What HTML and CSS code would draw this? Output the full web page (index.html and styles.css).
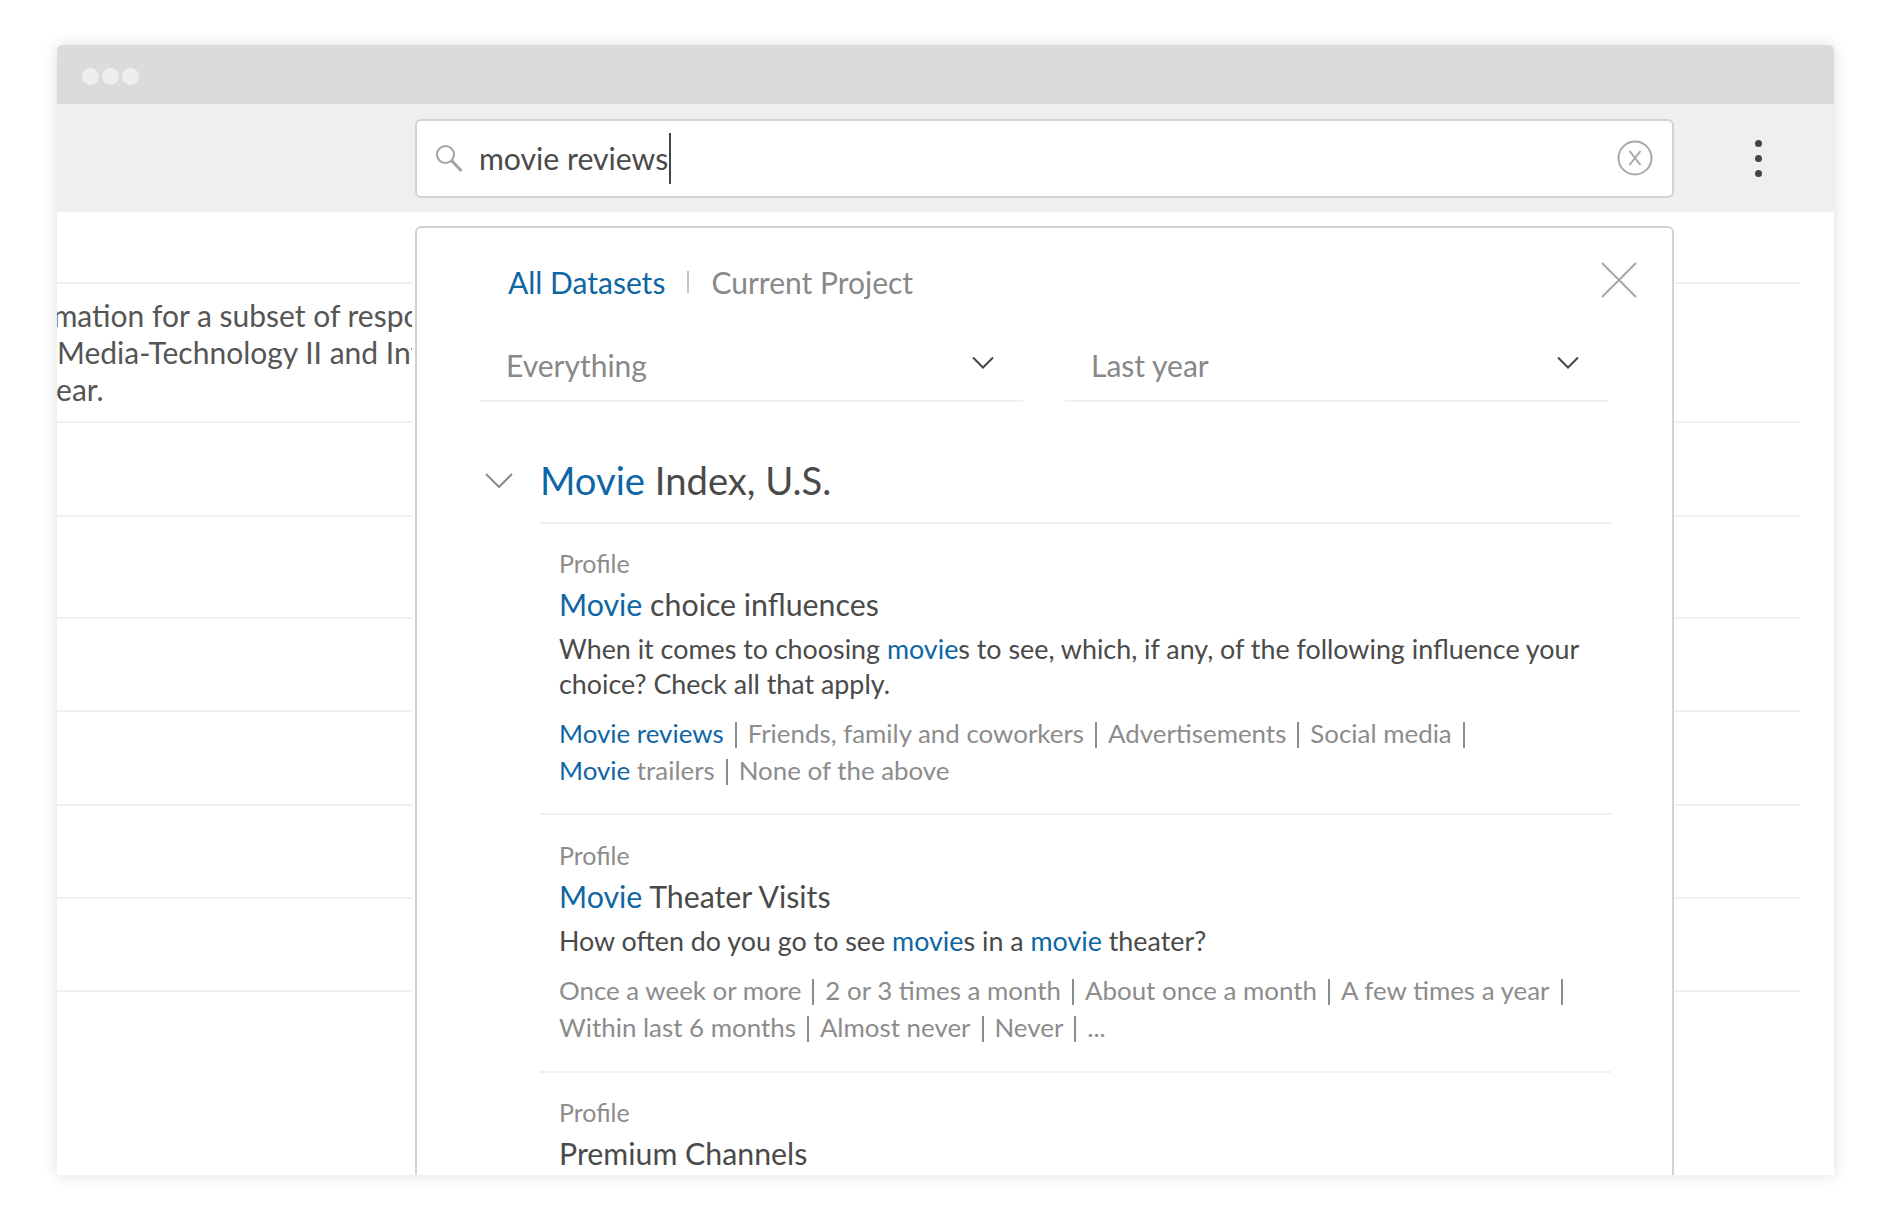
FILE: index.html
```html
<!DOCTYPE html>
<html lang="en">
<head>
    <meta charset="UTF-8">
    <title>Movie search</title>
    <link rel="stylesheet" href="styles.css">
</head>
<body>
    <div class="window">
        <div class="titlebar">
            <span class="dot"></span><span class="dot"></span><span class="dot"></span>
        </div>

        <!-- Search bar -->
        <div class="toolbar">
            <div class="search">
                <svg class="search-icon" width="28" height="28" viewBox="0 0 28 28" fill="none" stroke="#a3a3a3">
                    <circle cx="10.5" cy="10.5" r="8.5" stroke-width="2"/>
                    <path d="M16.5 16.5L26.5 27" stroke-width="3"/>
                </svg>
                <span class="search-text">movie reviews</span><span class="caret"></span>
                <svg class="clear-icon" width="36" height="36" viewBox="0 0 36 36" fill="none" stroke="#a8a8a8" stroke-width="2">
                    <circle cx="18" cy="18" r="16.5"/>
                    <path d="M12.5 11L23.5 25M23.5 11L12.5 25"/>
                </svg>
            </div>
            <div class="more"><span></span><span></span><span></span></div>
        </div>

        <!-- Page behind the panel -->
        <div class="content">
            <div class="row row-text">
                <div class="clip-line clip-a">information for a subset of respondents</div>
                <div class="clip-line clip-b">Media-Technology II and Internet</div>
                <div class="clip-line clip-c">year.</div>
            </div>
            <div class="row row-m"></div>
            <div class="row row-l"></div>
            <div class="row"></div>
            <div class="row row-m"></div>
            <div class="row"></div>
            <div class="row"></div>
            <div class="row-end"></div>

            <!-- Search results -->
            <div class="panel">
                <svg class="close" width="36" height="36" viewBox="0 0 36 36" fill="none" stroke="#a6a6a6" stroke-width="2">
                    <path d="M1 1L35 35M35 1L1 35"/>
                </svg>

                <div class="tabs">
                    <span class="hl">All Datasets</span>
                    <span class="tab-sep"></span>
                    <span>Current Project</span>
                </div>

                <div class="filters">
                    <div class="filter">
                        <span>Everything</span>
                        <svg width="24" height="13" viewBox="0 0 24 13" fill="none" stroke="#444" stroke-width="2"><path d="M2 1.5L12 11.5L22 1.5"/></svg>
                    </div>
                    <div class="filter">
                        <span>Last year</span>
                        <svg width="24" height="13" viewBox="0 0 24 13" fill="none" stroke="#444" stroke-width="2"><path d="M2 1.5L12 11.5L22 1.5"/></svg>
                    </div>
                </div>

                <div class="group-head">
                    <svg class="group-toggle" width="28" height="15" viewBox="0 0 28 15" fill="none" stroke="#8a8a8a" stroke-width="2"><path d="M1 1L14 14L27 1"/></svg>
                    <h2><span class="hl">Movie</span> Index, U.S.</h2>
                </div>

                <div class="item">
                    <div class="kind">Profile</div>
                    <div class="item-title"><span class="hl">Movie</span> choice influences</div>
                    <p class="question">When it comes to choosing <span class="hl">movie</span>s to see, which, if any, of the following influence your<br>choice? Check all that apply.</p>
                    <p class="answers"><span class="hl">Movie reviews</span><i></i>Friends, family and coworkers<i></i>Advertisements<i></i>Social media<i></i><br><span class="hl">Movie</span> trailers<i></i>None of the above</p>
                </div>

                <div class="item item-mid">
                    <div class="kind">Profile</div>
                    <div class="item-title"><span class="hl">Movie</span> Theater Visits</div>
                    <p class="question">How often do you go to see <span class="hl">movie</span>s in a <span class="hl">movie</span> theater?</p>
                    <p class="answers">Once a week or more<i></i>2 or 3 times a month<i></i>About once a month<i></i>A few times a year<i></i><br>Within last 6 months<i></i>Almost never<i></i>Never<i></i>...</p>
                </div>

                <div class="item">
                    <div class="kind">Profile</div>
                    <div class="item-title">Premium Channels</div>
                </div>
            </div>
        </div>
    </div>
</body>
</html>
```

FILE: styles.css
```css
body {
    margin: 0;
    height: 1218px;
    padding: 45px 57px 0 57px;
    box-sizing: border-box;
    overflow: hidden;
    background-color: #fff;
    font-family: Lato, "Liberation Sans", sans-serif;
    color: #4a4a4a;
}

.hl {
    color: #0f66a5;
}

.window {
    width: 1777px;
    height: 1130px;
    overflow: hidden;
    border-radius: 5px 5px 0 0;
    background-color: #fff;
    box-shadow: 0 0 16px rgba(0, 0, 0, 0.13);
}

.titlebar {
    height: 59px;
    padding: 4px 0 0 25px;
    box-sizing: border-box;
    display: flex;
    align-items: center;
    gap: 3px;
    background-color: #dbdbdb;
}

.dot {
    width: 17px;
    height: 17px;
    border-radius: 50%;
    background-color: #eee;
}

.toolbar {
    height: 108px;
    padding-left: 358px;
    display: flex;
    align-items: flex-start;
    background-color: #efefef;
}

.search {
    width: 1259px;
    height: 79px;
    margin-top: 15px;
    padding: 0 19px 0 18px;
    box-sizing: border-box;
    display: flex;
    align-items: center;
    border: 2px solid #d2d2d2;
    border-radius: 6px;
    background-color: #fff;
}

.search-icon {
    margin-right: 16px;
    margin-top: -1px;
}

.search-text {
    margin-top: -2px;
    font-size: 30.2px;
    color: #4a4a4a;
}

.caret {
    width: 2px;
    height: 51px;
    margin-left: 1px;
    background-color: #444;
}

.clear-icon {
    margin-left: auto;
    margin-top: -1px;
}

.more {
    margin: 36px 0 0 81px;
    display: flex;
    flex-direction: column;
    gap: 8px;
}

.more span {
    width: 7px;
    height: 7px;
    border-radius: 50%;
    background-color: #444;
}

.content {
    position: relative;
    padding: 70px 34px 0 0;
}

.row {
    height: 93px;
    box-sizing: border-box;
    border-top: 2px solid #f0f0f0;
}

.row-m {
    height: 94px;
}

.row-l {
    height: 102px;
}

.row-text {
    height: 139px;
    padding-top: 13px;
    font-size: 30px;
    line-height: 37px;
    color: #555;
}

.row-end {
    border-top: 2px solid #f0f0f0;
}

.clip-line {
    width: 355px;
    overflow: hidden;
    white-space: nowrap;
}

.clip-a {
    text-indent: -66px;
}

.clip-c {
    text-indent: -16px;
}

/* panel sits over the page and runs off the bottom of the window */
.panel {
    position: absolute;
    top: 14px;
    left: 358px;
    width: 1259px;
    height: 1000px;
    padding: 34px 0 0 63px;
    box-sizing: border-box;
    border: 2px solid #d2d2d2;
    border-radius: 6px 6px 0 0;
    background-color: #fff;
    box-shadow: -3px 0 0 #fff;
}

.close {
    position: absolute;
    top: 34px;
    right: 35px;
}

.tabs {
    height: 40px;
    padding-left: 28px;
    display: flex;
    align-items: center;
    gap: 22px;
    font-size: 30px;
    color: #888;
}

.tab-sep {
    width: 2px;
    height: 22px;
    background-color: #c4c4c4;
}

.filters {
    margin-top: 43px;
    display: flex;
    gap: 42px;
}

.filter {
    width: 543px;
    height: 55px;
    display: flex;
    justify-content: space-between;
    border-bottom: 2px solid #f0f0f0;
    font-size: 30px;
    line-height: 40px;
    color: #888;
}

.filter span {
    margin-left: 26px;
}

.filter svg {
    margin: 11px 28px 0 0;
}

.group-head {
    position: relative;
    margin-top: 53px;
}

.group-toggle {
    position: absolute;
    top: 18px;
    left: 5px;
}

h2 {
    width: 1071px;
    margin: 0 0 0 60px;
    padding-bottom: 17px;
    border-bottom: 2px solid #f0f0f0;
    font-size: 38.2px;
    font-weight: 400;
    line-height: 50px;
    color: #4a4a4a;
}

.item {
    width: 1071px;
    margin-left: 60px;
    padding: 24px 0 24px 19px;
    box-sizing: border-box;
    border-bottom: 2px solid #f0f0f0;
}

.item-mid {
    padding-top: 25px;
    padding-bottom: 25px;
}

.kind {
    font-size: 25px;
    line-height: 30px;
    color: #8c8c8c;
}

.item-title {
    margin-top: 8px;
    font-size: 30.3px;
    line-height: 36px;
}

.question {
    margin: 9px 0 0 0;
    font-size: 26.85px;
    line-height: 35px;
}

.answers {
    margin: 14px 0 0 0;
    font-size: 25.9px;
    line-height: 37px;
    color: #8c8c8c;
}

.answers i {
    display: inline-block;
    width: 2px;
    height: 26px;
    margin: 0 11px;
    vertical-align: -5px;
    background-color: #8c8c8c;
}
```
